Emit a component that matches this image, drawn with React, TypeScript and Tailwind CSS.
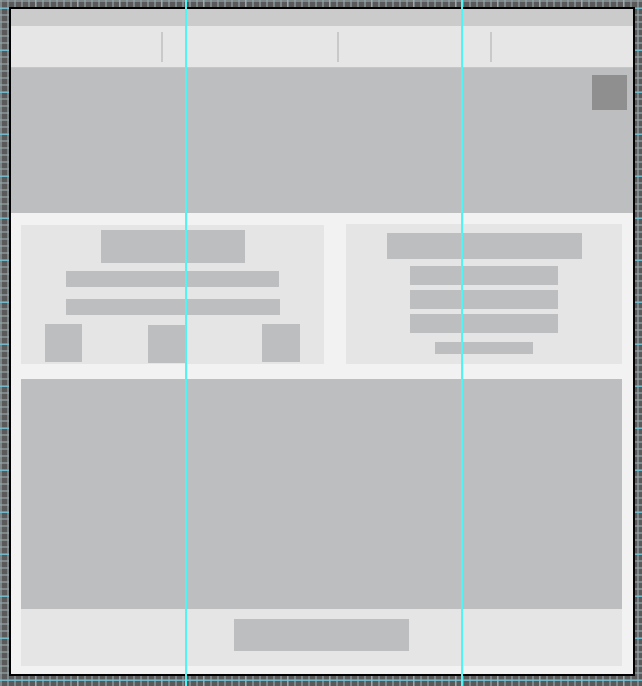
import React from "react";

export default function App() {
  return (
    <div className="relative w-[642px] h-[686px] overflow-hidden bg-[#5a5a5a] bg-[image:linear-gradient(to_right,rgba(110,200,220,0.75)_1px,transparent_1px),linear-gradient(to_bottom,rgba(110,200,220,0.75)_1px,transparent_1px),linear-gradient(to_right,rgba(150,165,170,0.6)_2px,transparent_2px),linear-gradient(to_bottom,rgba(150,165,170,0.6)_2px,transparent_2px)] bg-[size:42px_42px,42px_42px,7px_7px,7px_7px] bg-[position:35px_8px,35px_8px,0_0,0_0] pl-[9px] pt-[7px]">
      <div className="w-[626px] h-[669px] border-2 border-black flex flex-col bg-[#f2f2f2]">
        {/* top strip */}
        <div className="h-[17px] bg-[#cbcbcb]" />
        {/* nav */}
        <div className="h-[41px] bg-[#e6e6e6] flex items-center">
          <div className="w-[150px]" />
          <div className="w-[2px] h-[30px] bg-[#c9c9c9]" />
          <div className="w-[174px]" />
          <div className="w-[2px] h-[30px] bg-[#c9c9c9]" />
          <div className="w-[151px]" />
          <div className="w-[2px] h-[30px] bg-[#c9c9c9]" />
        </div>
        {/* hero */}
        <div className="h-[146px] bg-[#bdbebf] border-t border-[#c6c6c6] flex justify-end pt-[7px] pr-[6px]">
          <div className="w-[35px] h-[35px] bg-[#8f8f8f]" />
        </div>
        {/* main */}
        <div className="flex-1 flex flex-col pl-[10px] pr-[11px] pt-[11px] pb-[8px]">
          <div className="flex gap-[22px] h-[140px]">
            <div className="w-[303px] h-[139px] mt-[1px] bg-[#e5e5e5] flex flex-col items-center">
              <div className="mt-[5px] w-[144px] h-[33px] bg-[#bdbebf]" />
              <div className="mt-[8px] w-[213px] h-[16px] bg-[#bdbebf]" />
              <div className="mt-[12px] w-[214px] h-[16px] bg-[#bdbebf]" />
              <div className="self-stretch flex pl-[24px] mt-[9px]">
                <div className="w-[37px] h-[38px] bg-[#bdbebf]" />
                <div className="ml-[66px] mt-[1px] w-[37px] h-[38px] bg-[#bdbebf]" />
                <div className="ml-[77px] w-[38px] h-[38px] bg-[#bdbebf]" />
              </div>
            </div>
            <div className="w-[276px] h-[140px] bg-[#e5e5e5] flex flex-col items-center">
              <div className="mt-[9px] w-[195px] h-[26px] bg-[#bdbebf]" />
              <div className="mt-[7px] w-[148px] h-[19px] bg-[#bdbebf]" />
              <div className="mt-[5px] w-[148px] h-[19px] bg-[#bdbebf]" />
              <div className="mt-[5px] w-[148px] h-[19px] bg-[#bdbebf]" />
              <div className="mt-[9px] w-[98px] h-[12px] bg-[#bdbebf]" />
            </div>
          </div>
          <div className="mt-[15px] h-[230px] bg-[#bdbebf]" />
          <div className="h-[57px] bg-[#e5e5e5] flex justify-center pt-[10px]">
            <div className="w-[175px] h-[32px] bg-[#bdbebf]" />
          </div>
        </div>
      </div>
      {/* guide lines */}
      <div className="absolute top-0 left-[185px] w-[2px] h-[686px] bg-[#4ff4f4]" />
      <div className="absolute top-0 left-[461px] w-[2px] h-[686px] bg-[#4ff4f4]" />
    </div>
  );
}
